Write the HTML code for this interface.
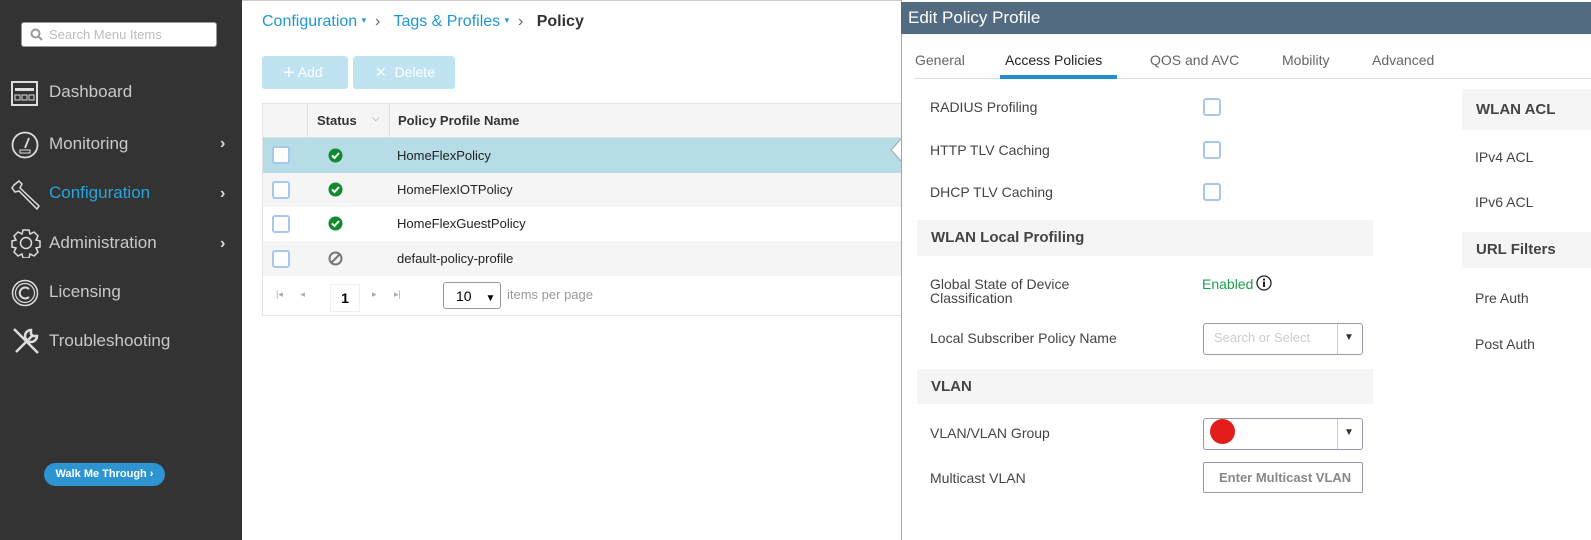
<!DOCTYPE html>
<html><head><meta charset="utf-8"><style>
*{margin:0;padding:0;box-sizing:border-box}
body{width:1591px;height:540px;overflow:hidden;background:#fff;font-family:"Liberation Sans",Arial,sans-serif;position:relative}
.a{position:absolute;white-space:nowrap}
.side{left:0;top:0;width:242px;height:540px;background:#333}
.nav{left:49px;font-size:17px;color:#c9c9c9}
.chev{left:220px;font-size:16px;color:#ddd;font-weight:bold}
.ico{left:11px;width:28px;height:28px}
.cb{width:18px;height:18px;border:2px solid #a9c6ec;border-radius:3px;background:#fff}
.lbl{font-size:14px;color:#444}
.band{background:#f5f5f5;font-weight:bold;color:#444;font-size:15px;padding-left:14px}
</style></head><body>
<div class="a" style="left:0;top:0;width:1591px;height:1px;background:#ccc"></div>
<div class="a side"></div>
<div class="a" style="left:21px;top:22px;width:196px;height:25px;background:#fff;border:1px solid #999;border-radius:3px"></div>
<svg class="a" style="left:30px;top:28px" width="14" height="14"><circle cx="5.5" cy="5.5" r="4" stroke="#999" stroke-width="2" fill="none"/><line x1="8.5" y1="8.5" x2="12" y2="12" stroke="#999" stroke-width="2"/></svg>
<div class="a" style="left:49px;top:27px;font-size:13px;color:#bbb">Search Menu Items</div>

<svg class="a ico" style="top:80px" viewBox="0 0 28 28"><rect x="1" y="2" width="25" height="23" fill="none" stroke="#ddd" stroke-width="2"/><rect x="4" y="8" width="19" height="3" fill="#ddd"/><rect x="4" y="15" width="5" height="5" fill="none" stroke="#ddd"/><rect x="11" y="15" width="5" height="5" fill="none" stroke="#ddd"/><rect x="18" y="15" width="5" height="5" fill="none" stroke="#ddd"/></svg>
<div class="a nav" style="top:82px">Dashboard</div>
<svg class="a ico" style="top:131px" viewBox="0 0 28 28"><circle cx="14" cy="14" r="12.5" fill="none" stroke="#ddd" stroke-width="1.8"/><line x1="14" y1="17" x2="18" y2="7" stroke="#ddd" stroke-width="1.8"/><rect x="9" y="19" width="10" height="3" fill="none" stroke="#ddd"/></svg>
<div class="a nav" style="top:134px">Monitoring</div><div class="a chev" style="top:135px">›</div>
<svg class="a ico" style="top:179px;width:32px;height:32px" viewBox="0 0 32 32"><path d="M3 6 L8 2 L11 5 L9 9 L28 27 L26 30 L8 12 L4 13 L1 9Z" fill="none" stroke="#ddd" stroke-width="1.5"/></svg>
<div class="a nav" style="top:183px;color:#27a5dc">Configuration</div><div class="a chev" style="top:185px">›</div>
<svg class="a ico" style="top:228px;width:30px;height:30px" viewBox="0 0 30 30"><circle cx="15" cy="15" r="5.5" fill="none" stroke="#ddd" stroke-width="1.5"/><path d="M12 2h6l1 4 4-2 4 4-2 4 4 1v6l-4 1 2 4-4 4-4-2-1 4h-6l-1-4-4 2-4-4 2-4-4-1v-6l4-1-2-4 4-4 4 2z" fill="none" stroke="#ddd" stroke-width="1.5"/></svg>
<div class="a nav" style="top:233px">Administration</div><div class="a chev" style="top:235px">›</div>
<svg class="a ico" style="top:279px" viewBox="0 0 28 28"><circle cx="14" cy="14" r="12.5" fill="none" stroke="#ddd" stroke-width="1.5"/><circle cx="14" cy="14" r="9.5" fill="none" stroke="#ddd" stroke-width="1.2"/><path d="M18 10 A5.5 5.5 0 1 0 18 18" fill="none" stroke="#ddd" stroke-width="2"/></svg>
<div class="a nav" style="top:282px">Licensing</div>
<svg class="a ico" style="top:326px;width:30px;height:30px" viewBox="0 0 30 30"><path d="M3 3 L27 27 M5 26 L22 9 M20 4a6 6 0 1 0 6 6l-4 0-2-2z" fill="none" stroke="#ddd" stroke-width="2.5"/></svg>
<div class="a nav" style="top:331px">Troubleshooting</div>
<div class="a" style="left:44px;top:463px;width:121px;height:23px;border-radius:12px;background:#2e94d1;color:#fff;font-size:11px;font-weight:bold;line-height:23px;text-align:center">Walk Me Through ›</div>

<div class="a" style="left:262px;top:13px;font-size:16px;color:#1f97d1">Configuration <span style="font-size:9px;vertical-align:3px">▾</span> <span style="color:#666">&nbsp;›&nbsp;&nbsp;</span> Tags &amp; Profiles <span style="font-size:9px;vertical-align:3px">▾</span> <span style="color:#666">&nbsp;›&nbsp;&nbsp;</span> <b style="color:#333">Policy</b></div>
<div class="a" style="left:262px;top:56px;width:86px;height:33px;background:#bfe3f1;border-radius:3px;color:#fff;font-size:14px;line-height:33px;padding-left:21px"><span style="font-size:20px;vertical-align:-2px">+</span> Add</div>
<div class="a" style="left:353px;top:56px;width:102px;height:33px;background:#bfe3f1;border-radius:3px;color:#fff;font-size:14px;line-height:33px;padding-left:22px">✕&nbsp; Delete</div>

<div class="a" style="left:262px;top:103px;width:640px;height:213px;border:1px solid #e3e3e3;border-right:none"></div>
<div class="a" style="left:263px;top:104px;width:640px;height:34px;background:#f5f5f5;border-bottom:1px solid #ddd"></div>
<div class="a" style="left:307px;top:104px;width:1px;height:34px;background:#e0e0e0"></div>
<div class="a" style="left:389px;top:104px;width:1px;height:34px;background:#e0e0e0"></div>
<div class="a" style="left:317px;top:113px;font-size:13px;font-weight:bold;color:#333">Status</div>
<div class="a" style="left:372px;top:113px;font-size:10px;color:#888">⌵</div>
<div class="a" style="left:398px;top:113px;font-size:13px;font-weight:bold;color:#333">Policy Profile Name</div>
<div class="a" style="left:263px;top:138px;width:640px;height:35px;background:#b6dce6"></div>
<div class="a" style="left:263px;top:173px;width:640px;height:34px;background:#f5f5f5"></div>
<div class="a" style="left:263px;top:241px;width:640px;height:35px;background:#f5f5f5"></div>
<div class="a cb" style="left:272px;top:146px"></div>
<div class="a cb" style="left:272px;top:181px"></div>
<div class="a cb" style="left:272px;top:215px"></div>
<div class="a cb" style="left:272px;top:250px"></div>
<svg class="a" style="left:328px;top:148px" width="15" height="15"><circle cx="7.5" cy="7.5" r="7" fill="#118a2e"/><path d="M4 7.5l2.5 2.5 4.5-5" stroke="#fff" stroke-width="2" fill="none"/></svg>
<svg class="a" style="left:328px;top:182px" width="15" height="15"><circle cx="7.5" cy="7.5" r="7" fill="#118a2e"/><path d="M4 7.5l2.5 2.5 4.5-5" stroke="#fff" stroke-width="2" fill="none"/></svg>
<svg class="a" style="left:328px;top:216px" width="15" height="15"><circle cx="7.5" cy="7.5" r="7" fill="#118a2e"/><path d="M4 7.5l2.5 2.5 4.5-5" stroke="#fff" stroke-width="2" fill="none"/></svg>
<svg class="a" style="left:328px;top:251px" width="15" height="15"><circle cx="7.5" cy="7.5" r="6" fill="none" stroke="#777" stroke-width="2"/><line x1="3.5" y1="11.5" x2="11.5" y2="3.5" stroke="#777" stroke-width="2"/></svg>
<div class="a" style="left:397px;top:148px;font-size:13px;color:#222">HomeFlexPolicy</div>
<div class="a" style="left:397px;top:182px;font-size:13px;color:#222">HomeFlexIOTPolicy</div>
<div class="a" style="left:397px;top:216px;font-size:13px;color:#222">HomeFlexGuestPolicy</div>
<div class="a" style="left:397px;top:251px;font-size:13px;color:#222">default-policy-profile</div>
<div class="a" style="left:276px;top:289px;font-size:9px;color:#aaa">|◂&nbsp;&nbsp;&nbsp;&nbsp;&nbsp;&nbsp;&nbsp;◂</div>
<div class="a" style="left:330px;top:284px;width:30px;height:28px;background:#fff;border:1px solid #f0f0f0;font-size:14px;font-weight:bold;text-align:center;line-height:26px">1</div>
<div class="a" style="left:372px;top:289px;font-size:9px;color:#aaa">▸&nbsp;&nbsp;&nbsp;&nbsp;&nbsp;&nbsp;&nbsp;▸|</div>
<div class="a" style="left:443px;top:282px;width:58px;height:27px;border:1px solid #999;border-radius:3px;font-size:14px;padding:5px 0 0 12px">10 <span style="font-size:10px;margin-left:10px">▼</span></div>
<div class="a" style="left:507px;top:287px;font-size:13px;color:#999">items per page</div>

<div class="a" style="left:901px;top:0;width:690px;height:540px;background:#fff;border-left:1px solid #9aa"></div>
<svg class="a" style="left:890px;top:139px" width="12" height="22"><path d="M11 0 L1 11 L11 22" fill="#fff" stroke="#9aa"/></svg>
<div class="a" style="left:901px;top:2px;width:690px;height:32px;background:#536b80;color:#fff;font-size:17px;line-height:32px;padding-left:7px">Edit Policy Profile</div>
<div class="a" style="left:915px;top:78px;width:676px;height:1px;background:#ddd"></div>
<div class="a" style="left:915px;top:52px;font-size:14px;color:#666">General</div>
<div class="a" style="left:1005px;top:52px;font-size:14px;color:#222">Access Policies</div>
<div class="a" style="left:1000px;top:75px;width:117px;height:4px;background:#1f8fcb"></div>
<div class="a" style="left:1150px;top:52px;font-size:14px;color:#666">QOS and AVC</div>
<div class="a" style="left:1282px;top:52px;font-size:14px;color:#666">Mobility</div>
<div class="a" style="left:1372px;top:52px;font-size:14px;color:#666">Advanced</div>

<div class="a lbl" style="left:930px;top:99px">RADIUS Profiling</div>
<div class="a lbl" style="left:930px;top:142px">HTTP TLV Caching</div>
<div class="a lbl" style="left:930px;top:184px">DHCP TLV Caching</div>
<div class="a cb" style="left:1203px;top:98px"></div>
<div class="a cb" style="left:1203px;top:141px"></div>
<div class="a cb" style="left:1203px;top:183px"></div>
<div class="a band" style="left:917px;top:220px;width:456px;height:36px;line-height:36px">WLAN Local Profiling</div>
<div class="a lbl" style="left:930px;top:277px;line-height:14px">Global State of Device<br>Classification</div>
<div class="a" style="left:1202px;top:276px;font-size:14px;color:#1ea04a">Enabled</div>
<svg class="a" style="left:1256px;top:275px" width="16" height="16"><circle cx="8" cy="8" r="7" fill="none" stroke="#222" stroke-width="1.3"/><circle cx="8" cy="4.5" r="1.1" fill="#222"/><rect x="7" y="6.5" width="2" height="5.5" fill="#222"/></svg>
<div class="a lbl" style="left:930px;top:330px">Local Subscriber Policy Name</div>
<div class="a" style="left:1203px;top:323px;width:160px;height:32px;border:1px solid #99a;border-radius:3px"></div>
<div class="a" style="left:1214px;top:330px;font-size:13px;color:#ccc">Search or Select</div>
<div class="a" style="left:1337px;top:324px;width:1px;height:30px;background:#ccc"></div>
<div class="a" style="left:1344px;top:332px;font-size:10px;color:#333">▼</div>
<div class="a band" style="left:917px;top:369px;width:456px;height:35px;line-height:35px">VLAN</div>
<div class="a lbl" style="left:930px;top:425px">VLAN/VLAN Group</div>
<div class="a" style="left:1203px;top:418px;width:160px;height:32px;border:1px solid #99a;border-radius:3px"></div>
<div class="a" style="left:1337px;top:419px;width:1px;height:30px;background:#ccc"></div>
<div class="a" style="left:1344px;top:427px;font-size:10px;color:#333">▼</div>
<div class="a" style="left:1210px;top:419px;width:25px;height:25px;border-radius:50%;background:#e21b1b"></div>
<div class="a lbl" style="left:930px;top:470px">Multicast VLAN</div>
<div class="a" style="left:1203px;top:462px;width:160px;height:31px;border:1px solid #99a;border-radius:2px;font-size:13px;color:#888;font-weight:bold;line-height:29px;padding-left:15px">Enter Multicast VLAN</div>

<div class="a band" style="left:1462px;top:89px;width:129px;height:41px;line-height:41px">WLAN ACL</div>
<div class="a lbl" style="left:1475px;top:149px">IPv4 ACL</div>
<div class="a lbl" style="left:1475px;top:194px">IPv6 ACL</div>
<div class="a band" style="left:1462px;top:232px;width:129px;height:36px;line-height:36px">URL Filters</div>
<div class="a lbl" style="left:1475px;top:290px">Pre Auth</div>
<div class="a lbl" style="left:1475px;top:336px">Post Auth</div>
</body></html>
